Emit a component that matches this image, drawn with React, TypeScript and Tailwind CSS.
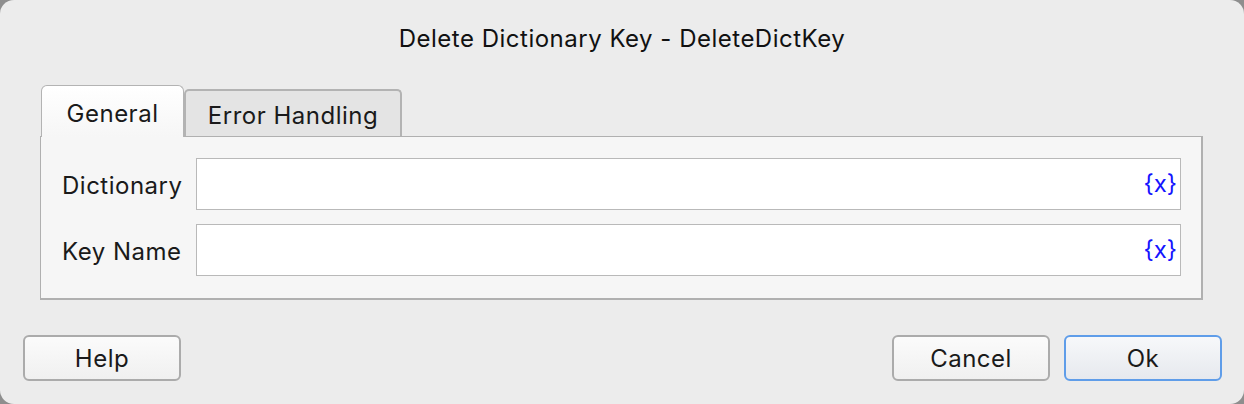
const font = { fontFamily: 'Inter, "Liberation Sans", sans-serif' };

function VarField() {
  return (
    <div className="flex h-[52px] flex-1 items-center justify-end border border-[#b9b9b9] bg-white pr-[3px]">
      <span className="text-[24px] leading-none text-[#1414ff]">{'{x}'}</span>
    </div>
  );
}

function Row({ label }: { label: string }) {
  return (
    <div className="flex items-center">
      <span className="w-[134px] pt-[3px] text-[24px] tracking-[0.5px] text-[#1a1a1a]">{label}</span>
      <VarField />
    </div>
  );
}

function Button({ label, primary }: { label: string; primary?: boolean }) {
  return (
    <button
      className={
        'flex h-[46px] w-[158px] items-center justify-center rounded-[6px] bg-gradient-to-b pt-[2px] text-[24px] tracking-[0.5px] text-[#1a1a1a] ' +
        (primary
          ? 'border-2 border-[#5f9de9] from-[#f7f8fa] to-[#e6e9ee]'
          : 'border-2 border-[#ababab] from-[#fbfbfb] to-[#f0f0f0]')
      }
    >
      {label}
    </button>
  );
}

export default function App() {
  return (
    <div className="h-[404px] w-[1244px] bg-[#8e8e8e]" style={font}>
      <div className="flex h-full w-full flex-col rounded-[14px] bg-[#ececec]">
        <div className="flex h-[85px] items-center justify-center pb-[8px] text-[24px] tracking-[0.5px] text-[#111]">
          Delete Dictionary Key - DeleteDictKey
        </div>

        <div className="ml-[40px] mr-[41px] flex flex-col">
          <div className="flex items-end pl-[1px]">
            <div className="relative z-10 -mb-px flex h-[52px] w-[143px] items-center justify-center rounded-t-[6px] border border-b-0 border-[#b3b3b3] bg-gradient-to-b from-white to-[#f6f6f6] pt-[4px] text-[24px] tracking-[0.5px] text-[#1a1a1a]">
              General
            </div>
            <div className="flex h-[47px] w-[218px] items-center justify-center rounded-t-[5px] border-2 border-b-0 border-[#b3b3b3] bg-[#e4e4e4] pt-[4px] text-[24px] tracking-[0.5px] text-[#1a1a1a]">
              Error Handling
            </div>
          </div>
          <div className="flex h-[164px] flex-col gap-[14px] border border-r-2 border-b-2 border-[#b0b0b0] bg-[#f6f6f6] pl-[21px] pr-[20px] pt-[21px]">
            <Row label="Dictionary" />
            <Row label="Key Name" />
          </div>
        </div>

        <div className="mt-[35px] flex items-center pl-[23px] pr-[22px]">
          <Button label="Help" />
          <div className="flex-1" />
          <div className="flex gap-[14px]">
            <Button label="Cancel" />
            <Button label="Ok" primary />
          </div>
        </div>
      </div>
    </div>
  );
}
